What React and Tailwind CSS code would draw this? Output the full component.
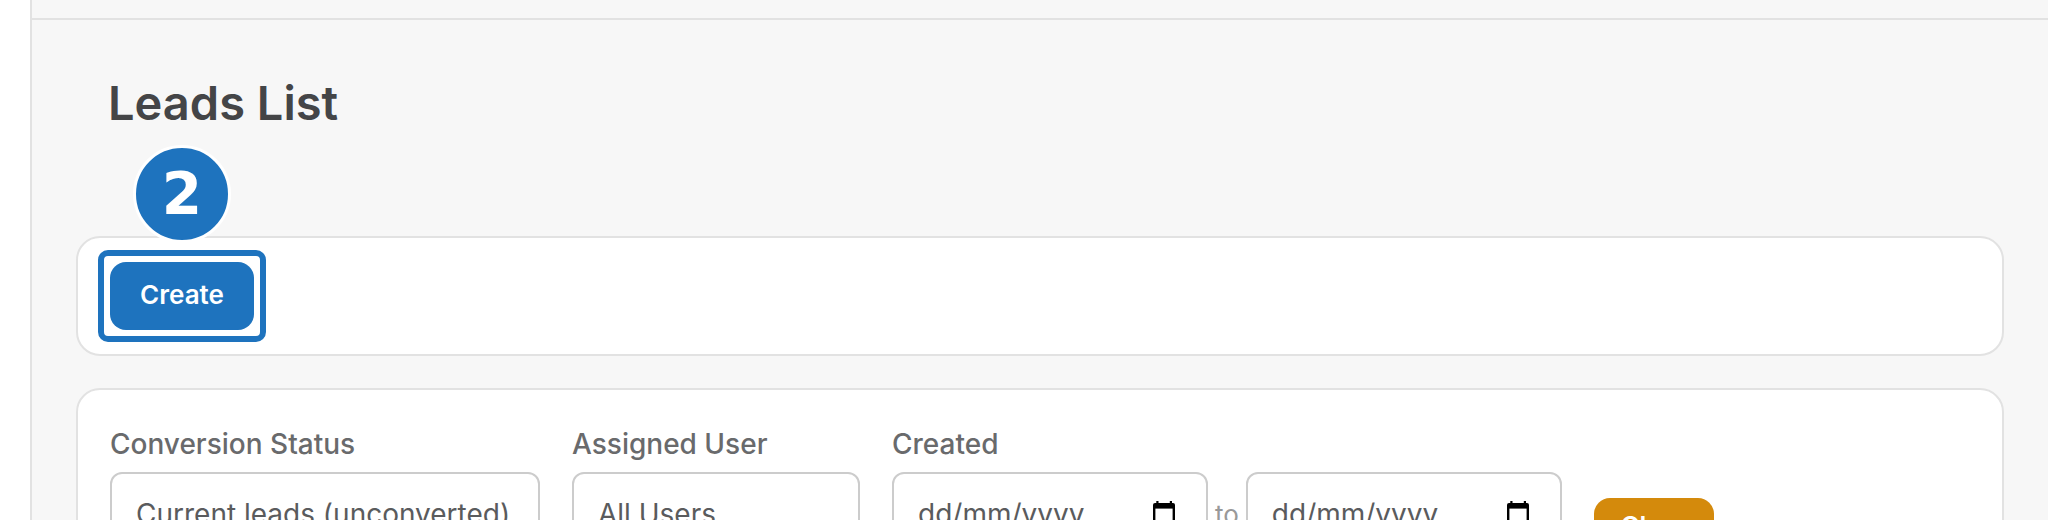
import React from "react";

const control =
  "h-[84px] rounded-xl border-2 border-[#cccccc] bg-white px-6 text-[28px] text-[#5a5b5d] placeholder:text-[#5a5b5d] placeholder:opacity-100";

function Field({ label, htmlFor, children }) {
  return (
    <div className="flex flex-col gap-2">
      <label htmlFor={htmlFor} className="text-[28px] leading-10 font-medium text-[#696a6c]">
        {label}
      </label>
      {children}
    </div>
  );
}

function CalendarIcon() {
  return (
    <svg viewBox="0 0 22 25" className="h-[25px] w-[22px]" aria-hidden="true">
      <path d="M3.3 0h2.2v3H3.3zM16.8 0H19v3h-2.2z" fill="#000" />
      <rect x="0" y="2" width="22" height="23" rx="2" fill="#000" />
      <rect x="2.4" y="7.6" width="17.2" height="15" fill="#fff" />
    </svg>
  );
}

function DateInput({ id, label }) {
  return (
    <div className="relative">
      <input id={id} aria-label={label} placeholder="dd/mm/yyyy" className={`${control} w-[316px]`} />
      <button type="button" aria-label={`Pick ${label}`} className="absolute top-[29px] right-[33px]">
        <CalendarIcon />
      </button>
    </div>
  );
}

export default function App() {
  return (
    <div className="flex h-screen overflow-hidden bg-[#f7f7f7] font-['Inter',sans-serif]">
      <aside className="w-8 shrink-0 border-r-2 border-[#e2e2e2] bg-white" />
      <div className="min-w-0 flex-1">
        <header className="h-5 border-b-2 border-[#e2e2e2]" />
        <main className="flex flex-col gap-8 px-11 pt-[57px]">
          <h1 className="mb-[75px] px-8 text-[47px] leading-[52px] font-semibold text-[#444547]">Leads List</h1>

          <section className="flex rounded-3xl border-2 border-[#e2e2e2] bg-white px-8 py-6">
            <div className="relative">
              <button
                type="button"
                className="h-[68px] w-36 rounded-2xl bg-[#1e73be] pb-1 text-[26px] font-semibold text-white"
              >
                Create
              </button>
              <div className="pointer-events-none absolute -inset-3 rounded-[10px] border-6 border-[#1e73be]" />
              <div className="absolute bottom-[87px] left-1/2 flex size-[98px] -translate-x-1/2 items-center justify-center rounded-full border-3 border-white bg-[#1e73be] font-['DejaVu_Sans',sans-serif] text-[58px] leading-none font-bold text-white">
                2
              </div>
            </div>
          </section>

          <section className="flex items-end gap-8 rounded-3xl border-2 border-[#e2e2e2] bg-white px-8 pt-[34px] pb-8">
            <Field label="Conversion Status" htmlFor="status">
              <select id="status" className={`${control} w-[430px] appearance-none`}>
                <option>Current leads (unconverted)</option>
              </select>
            </Field>
            <Field label="Assigned User" htmlFor="user">
              <select id="user" className={`${control} w-72 appearance-none`}>
                <option>All Users</option>
              </select>
            </Field>
            <Field label="Created" htmlFor="from">
              <div className="flex items-center gap-[7px]">
                <DateInput id="from" label="Created from" />
                <span className="text-[26px] text-[#999999]">to</span>
                <DateInput id="to" label="Created to" />
              </div>
            </Field>
            <button
              type="button"
              className="h-[58px] w-[120px] rounded-2xl bg-[#d48a0c] pb-1 text-[26px] font-semibold text-white"
            >
              Clear
            </button>
          </section>
        </main>
      </div>
    </div>
  );
}
